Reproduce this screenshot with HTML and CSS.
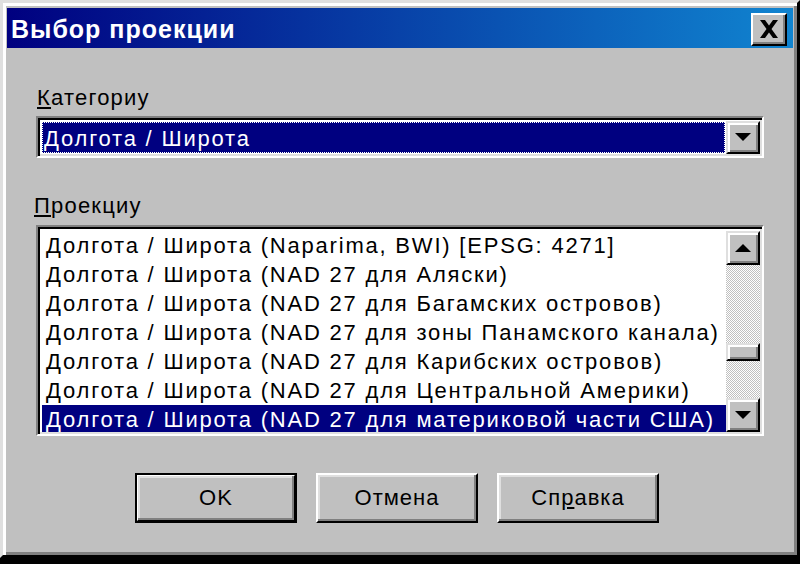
FILE: index.html
```html
<!DOCTYPE html>
<html lang="ru">
<head>
    <meta charset="UTF-8">
    <title>Выбор проекции</title>
    <link rel="stylesheet" href="styles.css">
</head>
<body>
    <div class="window">
        <div class="titlebar">
            <span class="title">Выбор проекции</span>
            <button class="close-btn" title="Закрыть">
                <svg width="20" height="18" viewBox="0 0 20 18"><path d="M1 0h5l4 5.5 4-5.5h5l-6.5 9 6.5 9h-5l-4-5.5-4 5.5H1l6.5-9z" fill="#000"/></svg>
            </button>
        </div>

        <div class="content">
            <label class="field-label"><u>К</u>атегориу</label>
            <div class="combo">
                <div class="combo-value">Долгота / Широта</div>
                <div class="arrow-btn">
                    <svg width="16" height="9" viewBox="0 0 16 9"><polygon points="0,0 16,0 8,8" fill="#000"/></svg>
                </div>
            </div>

            <label class="field-label second"><u>П</u>роекциу</label>
            <div class="listbox">
                <ul class="items">
                    <li>Долгота / Широта (Naparima, BWI) [EPSG: 4271]</li>
                    <li>Долгота / Широта (NAD 27 для Аляски)</li>
                    <li>Долгота / Широта (NAD 27 для Багамских островов)</li>
                    <li>Долгота / Широта (NAD 27 для зоны Панамского канала)</li>
                    <li>Долгота / Широта (NAD 27 для Карибских островов)</li>
                    <li>Долгота / Широта (NAD 27 для Центральной Америки)</li>
                    <li class="selected">Долгота / Широта (NAD 27 для материковой части США)</li>
                </ul>
                <div class="scrollbar">
                    <div class="arrow-btn small">
                        <svg width="16" height="9" viewBox="0 0 16 9"><polygon points="0,8 16,8 8,0" fill="#000"/></svg>
                    </div>
                    <div class="track top"></div>
                    <div class="thumb"></div>
                    <div class="track bottom"></div>
                    <div class="arrow-btn small">
                        <svg width="16" height="9" viewBox="0 0 16 9"><polygon points="0,0 16,0 8,8" fill="#000"/></svg>
                    </div>
                </div>
            </div>

            <div class="buttons">
                <button class="btn default">OK</button>
                <button class="btn">Отмена</button>
                <button class="btn">Сп<u>р</u>авка</button>
            </div>
        </div>
    </div>
</body>
</html>
```

FILE: styles.css
```css
body {
    margin: 0;
    background: #000;
    font-family: "Liberation Sans", Arial, sans-serif;
}
.window {
    box-sizing: border-box;
    width: 800px;
    height: 558px;
    background: #c0c0c0;
    border: 3px solid;
    border-color: #dfdfdf #000 #000 #dfdfdf;
    box-shadow: inset 3px 3px #fff, inset -3px -3px #808080;
    padding: 5px 4px 4px 4px;
}
.titlebar {
    height: 40px;
    display: flex;
    align-items: center;
    justify-content: space-between;
    background: linear-gradient(to right, #000080, #1084d0);
    padding: 2px 6px 0 4px;
    box-sizing: border-box;
}
.title {
    color: #fff;
    font-weight: bold;
    font-size: 25px;
    letter-spacing: 1px;
}
.close-btn {
    width: 36px;
    height: 33px;
    padding: 0;
    background: #c0c0c0;
    border: 2px solid;
    border-color: #fff #000 #000 #fff;
    box-shadow: inset -2px -2px #808080;
    display: flex;
    align-items: center;
    justify-content: center;
}
.content {
    padding: 36px 29px 0 29px;
}
.field-label {
    display: block;
    font-size: 22px;
    line-height: 28px;
    letter-spacing: 1.2px;
    color: #000;
    margin-left: 1px;
}
.field-label.second {
    margin-top: 34px;
    margin-left: -2px;
}
.combo {
    margin-top: 4px;
    height: 42px;
    box-sizing: border-box;
    display: flex;
    border: 2px solid;
    border-color: #808080 #fff #fff #808080;
    box-shadow: inset 2px 2px #000, inset -2px -2px #dfdfdf;
    padding: 4px 3px 3px 4px;
    background: #fff;
}
.combo-value {
    flex: 1;
    background: #000080;
    color: #fff;
    font-size: 22px;
    line-height: 33px;
    letter-spacing: 1.8px;
    padding-left: 2px;
    outline: 1px dotted #fff;
    outline-offset: -1px;
}
.arrow-btn {
    width: 34px;
    box-sizing: border-box;
    background: #c0c0c0;
    border: 2px solid;
    border-color: #dfdfdf #000 #000 #dfdfdf;
    box-shadow: inset 2px 2px #fff, inset -2px -2px #808080;
    display: flex;
    align-items: center;
    justify-content: center;
}
.combo .arrow-btn {
    margin: -1px -1px -1px 1px;
}
.listbox {
    margin-top: 5px;
    height: 211px;
    box-sizing: border-box;
    display: flex;
    border: 2px solid;
    border-color: #808080 #fff #fff #808080;
    box-shadow: inset 2px 2px #000, inset -2px -2px #dfdfdf;
    padding: 4px 2px 2px 4px;
    background: #fff;
}
.items {
    flex: 1;
    list-style: none;
    margin: 0;
    padding: 0;
    overflow: hidden;
}
.items li {
    height: 29px;
    line-height: 29px;
    font-size: 22px;
    letter-spacing: 1.8px;
    white-space: nowrap;
    padding-left: 4px;
    color: #000;
}
.items li.selected {
    background: #000080;
    color: #fff;
}
.scrollbar {
    width: 34px;
    display: flex;
    flex-direction: column;
    background: repeating-conic-gradient(#c0c0c0 0 25%, #fff 0 50%) 0 0 / 2px 2px;
}
.arrow-btn.small {
    height: 34px;
    width: 34px;
}
.track.top {
    height: 78px;
}
.track.bottom {
    flex: 1;
}
.thumb {
    height: 18px;
    box-sizing: border-box;
    background: #c0c0c0;
    border: 2px solid;
    border-color: #dfdfdf #000 #000 #dfdfdf;
    box-shadow: inset 2px 2px #fff, inset -2px -2px #808080;
}
.buttons {
    display: flex;
    gap: 19px;
    margin-top: 37px;
    padding-left: 99px;
}
.btn {
    width: 162px;
    height: 50px;
    background: #c0c0c0;
    border: 2px solid;
    border-color: #fff #000 #000 #fff;
    box-shadow: inset -2px -2px #808080, inset 2px 2px #dfdfdf;
    font-family: "Liberation Sans", Arial, sans-serif;
    font-size: 22px;
    letter-spacing: 1px;
    color: #000;
    padding: 0;
}
.btn.default {
    outline: 2px solid #000;
    outline-offset: -2px;
    border-width: 3px;
}
```
